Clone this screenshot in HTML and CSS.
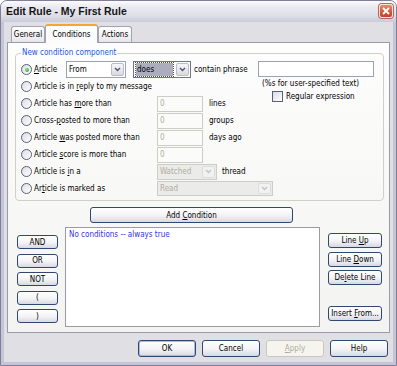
FILE: index.html
```html
<!DOCTYPE html>
<html lang="en">
<head>
    <meta charset="UTF-8">
    <title>Edit Rule - My First Rule</title>
    <link rel="stylesheet" href="styles.css">
</head>
<body>
<div class="window">
    <div class="titlebar">
        <span class="title">Edit Rule - My First Rule</span>
        <span class="close">
            <svg width="8" height="8" viewBox="0 0 8 8"><path d="M1 1 L7 7 M7 1 L1 7" stroke="#fff" stroke-width="1.8"/></svg>
        </span>
    </div>

    <div class="client">
        <div class="tabs">
            <span class="tab tab-general">General</span>
            <span class="tab tab-conditions active">Conditions</span>
            <span class="tab tab-actions">Actions</span>
        </div>

        <div class="page">
            <fieldset class="group">
                <legend>New condition component</legend>
                <div class="grid">
                    <!-- first row: field / operator / phrase -->
                    <div class="row1">
                        <span class="radio checked"></span>
                        <span class="lbl lbl-article"><u>A</u>rticle</span>
                        <span class="combo combo-from">
                            <span class="combo-text">From</span>
                            <span class="combo-btn"><svg width="7" height="5" viewBox="0 0 7 5"><path d="M1 1 L3.5 3.5 L6 1" fill="none" stroke="#4a5770" stroke-width="1.4"/></svg></span>
                        </span>
                        <span class="combo combo-does">
                            <span class="combo-text"><span class="sel">does</span></span>
                            <span class="combo-btn"><svg width="7" height="5" viewBox="0 0 7 5"><path d="M1 1 L3.5 3.5 L6 1" fill="none" stroke="#4a5770" stroke-width="1.4"/></svg></span>
                        </span>
                        <span class="phrase-lbl">contain phrase</span>
                    </div>
                    <div class="phrase">
                        <span class="textbox phrase-box"></span>
                        <span class="hint">(%s for user-specified text)</span>
                        <span class="check-row"><span class="check"></span>Regular expression</span>
                    </div>

                    <div class="opt"><span class="radio"></span><span class="lbl">Article is in <u>r</u>eply to my message</span></div>

                    <div class="opt"><span class="radio"></span><span class="lbl">Article has <u>m</u>ore than</span></div>
                    <div class="ctl ctl-short"><span class="textbox num">0</span><span>lines</span></div>

                    <div class="opt"><span class="radio"></span><span class="lbl">Cross-<u>p</u>osted to more than</span></div>
                    <div class="ctl"><span class="textbox num">0</span><span>groups</span></div>

                    <div class="opt"><span class="radio"></span><span class="lbl">Article <u>w</u>as posted more than</span></div>
                    <div class="ctl"><span class="textbox num">0</span><span>days ago</span></div>

                    <div class="opt"><span class="radio"></span><span class="lbl">Article <u>s</u>core is more than</span></div>
                    <div class="ctl"><span class="textbox num">0</span></div>

                    <div class="opt"><span class="radio"></span><span class="lbl">Article is <u>i</u>n a</span></div>
                    <div class="ctl">
                        <span class="combo combo-watched disabled">
                            <span class="combo-text">Watched</span>
                            <span class="combo-btn"><svg width="7" height="5" viewBox="0 0 7 5"><path d="M1 1 L3.5 3.5 L6 1" fill="none" stroke="#c3c3cb" stroke-width="1.4"/></svg></span>
                        </span>
                        <span class="after-combo">thread</span>
                    </div>

                    <div class="opt"><span class="radio"></span><span class="lbl">Ar<u>t</u>icle is marked as</span></div>
                    <div class="ctl">
                        <span class="combo combo-read disabled">
                            <span class="combo-text">Read</span>
                            <span class="combo-btn"><svg width="7" height="5" viewBox="0 0 7 5"><path d="M1 1 L3.5 3.5 L6 1" fill="none" stroke="#c3c3cb" stroke-width="1.4"/></svg></span>
                        </span>
                    </div>
                </div>
            </fieldset>

            <span class="btn btn-add"><span>Add <u>C</u>ondition</span></span>

            <div class="editor">
                <div class="ops">
                    <span class="btn op"><span>AND</span></span>
                    <span class="btn op"><span>OR</span></span>
                    <span class="btn op"><span>NOT</span></span>
                    <span class="btn op"><span>(</span></span>
                    <span class="btn op"><span>)</span></span>
                </div>
                <div class="list">No conditions -- always true</div>
                <div class="side">
                    <span class="btn"><span>Line <u>U</u>p</span></span>
                    <span class="btn"><span>Line <u>D</u>own</span></span>
                    <span class="btn"><span>De<u>l</u>ete Line</span></span>
                    <span class="btn insert"><span>Insert <u>F</u>rom...</span></span>
                </div>
            </div>
        </div>

        <div class="footer">
            <span class="btn btn-foot default"><span>OK</span></span>
            <span class="btn btn-foot"><span>Cancel</span></span>
            <span class="btn btn-foot disabled"><span><u>A</u>pply</span></span>
            <span class="btn btn-foot"><span>Help</span></span>
        </div>
    </div>
</div>
</body>
</html>
```

FILE: styles.css
```css
* {
    box-sizing: border-box;
}

body {
    margin: 0;
    background: #fff;
    font-family: "DejaVu Sans Condensed", "DejaVu Sans", sans-serif;
    font-size: 8px;
    color: #000;
}

u {
    text-underline-offset: 1px;
}

/* window frame */
.window {
    width: 397px;
    height: 366px;
    border: 1px solid #7f7e99;
    border-radius: 7px 7px 0 0;
    background: #c6c5d7;
    display: flex;
    flex-direction: column;
    overflow: hidden;
}

.titlebar {
    height: 21px;
    display: flex;
    align-items: flex-start;
    justify-content: space-between;
    padding: 0 3px 0 5px;
    background: linear-gradient(#fdfdff, #ebebf1 25%, #dedee7 70%, #cacad9);
}

.title {
    font: bold 10.5px "Liberation Sans", sans-serif;
    color: #151515;
    line-height: 21px;
}

.close {
    width: 14px;
    height: 14px;
    margin-top: 3px;
    border: 1px solid #f4e2dc;
    border-radius: 3px;
    background: linear-gradient(#e88a70, #d0583c 60%, #c24428);
    display: flex;
    align-items: center;
    justify-content: center;
    box-shadow: 0 0 0 1px #b06a60;
}

.client {
    flex: 1;
    margin: 0 3px 3px;
    background: #e0dfe3;
    display: flex;
    flex-direction: column;
}

/* tabs */
.tabs {
    height: 20px;
    display: flex;
    align-items: flex-end;
    padding-left: 7px;
}

.tab {
    height: 16px;
    border: 1px solid #a3a3b5;
    border-bottom: none;
    border-radius: 3px 3px 0 0;
    background: linear-gradient(#ffffff, #f2f2f2 60%, #e6e6e9);
    display: flex;
    align-items: center;
    justify-content: center;
}

.tab-general {
    width: 34px;
}

.tab-conditions {
    width: 53px;
}

.tab-actions {
    width: 34px;
}

.tab.active {
    height: 19px;
    margin-bottom: -1px;
    position: relative;
    z-index: 1;
    border-top: 2px solid #f6a531;
    background: #fcfcfc;
}

.page {
    height: 291px;
    margin: 0 3px;
    border: 1px solid #9a9aab;
    background: linear-gradient(#fdfdfd, #f3f3f1);
    padding: 5px 5px 5px 7px;
    display: flex;
    flex-direction: column;
}

/* condition group */
.group {
    margin: 0;
    padding: 3px 5px 3px 5px;
    border: 1px solid #d0d0c8;
    border-radius: 4px;
    min-width: 0;
}

.group legend {
    padding: 0 1px;
    line-height: 10px;
    color: #1e5bd5;
}

.grid {
    display: grid;
    grid-template-columns: 136px 101px 1fr;
    grid-template-rows: repeat(8, 17px);
}

.row1 {
    grid-column: 1 / 3;
    grid-row: 1;
    display: flex;
    align-items: center;
}

.opt {
    grid-column: 1;
    display: flex;
    align-items: center;
}

.ctl {
    grid-column: 2 / 4;
    display: flex;
    align-items: center;
    gap: 6px;
}

.ctl-short {
    grid-column: 2;
}

.lbl {
    margin-left: 2px;
    white-space: nowrap;
}

.lbl-article {
    width: 32px;
}

.phrase-lbl {
    margin-left: 3px;
    white-space: nowrap;
}

.phrase {
    grid-column: 3;
    grid-row: 1 / 4;
    display: flex;
    flex-direction: column;
}

.phrase-box {
    width: 116px;
    height: 16px;
}

.hint {
    line-height: 11px;
    margin: 1px 0 0 4px;
    white-space: nowrap;
}

.check-row {
    display: flex;
    align-items: center;
    gap: 3px;
    margin: 2px 0 0 14px;
    white-space: nowrap;
}

/* radio + check */
.radio {
    width: 11px;
    height: 11px;
    flex: none;
    border: 1px solid #58607a;
    border-radius: 50%;
    background: linear-gradient(135deg, #dcdce4, #ffffff);
    display: flex;
    align-items: center;
    justify-content: center;
}

.radio.checked::after {
    content: "";
    width: 4px;
    height: 4px;
    border-radius: 50%;
    background: radial-gradient(circle at 35% 35%, #8fe48f, #1f9e1f);
}

.check {
    width: 11px;
    height: 11px;
    border: 1px solid #58607a;
    background: linear-gradient(135deg, #dcdce4, #ffffff);
}

/* text boxes and combos */
.textbox {
    border: 1px solid #9aa2b4;
    background: #fff;
}

.num {
    width: 46px;
    height: 16px;
    border-color: #cdcdc6;
    background: #fbfbf9;
    color: #b0ae9e;
    padding-left: 2px;
    line-height: 14px;
}

.combo {
    height: 17px;
    border: 1px solid #9aa2b4;
    background: #fff;
    display: flex;
    align-items: stretch;
}

.combo-text {
    flex: 1;
    padding: 1px 2px;
    display: flex;
    align-items: center;
}

.combo-btn {
    width: 13px;
    margin: 1px;
    border: 1px solid #b8bccb;
    border-radius: 2px;
    background: linear-gradient(#f7f7fa, #d9d9e2);
    display: flex;
    align-items: center;
    justify-content: center;
}

.combo-from {
    width: 60px;
}

.combo-does {
    width: 58px;
    margin-left: 7px;
    border-color: #6c7590;
}

.sel {
    flex: 1;
    height: 100%;
    background: #abadbc;
    outline: 1px dotted #555;
    padding-left: 1px;
    display: flex;
    align-items: center;
}

.combo.disabled {
    border-color: #cdcdc6;
    background: #ebebe9;
    color: #aeada0;
}

.combo.disabled .combo-btn {
    border-color: #dcdcdc;
    background: #f2f2f2;
}

.combo-watched {
    width: 60px;
    height: 16px;
}

.after-combo {
    margin-left: -1px;
}

.combo-read {
    width: 116px;
    height: 15px;
}

/* buttons */
.btn {
    display: flex;
    align-items: center;
    justify-content: center;
    border: 1px solid #30486e;
    border-radius: 3px;
    background: linear-gradient(#ffffff, #f3f3f6 55%, #d8d8e2);
    white-space: nowrap;
}

.btn-add {
    width: 203px;
    height: 16px;
    margin: 6px 0 0 75px;
}

.editor {
    height: 100px;
    margin-top: 4px;
    display: flex;
}

.ops {
    width: 41px;
    margin-left: 2px;
    padding-top: 8px;
    display: flex;
    flex-direction: column;
    gap: 4.5px;
}

.op {
    height: 14px;
}

.list {
    width: 255px;
    margin-left: 7px;
    border: 1px solid #9c9aa8;
    background: #fff;
    color: #3434e6;
    padding: 2px 3px;
}

.side {
    width: 54px;
    margin-left: 8px;
    padding: 6px 0 6px;
    display: flex;
    flex-direction: column;
    gap: 3.5px;
}

.side .btn {
    height: 15px;
}

.side .insert {
    margin-top: auto;
}

.footer {
    display: flex;
    justify-content: flex-end;
    gap: 6px;
    padding: 7px 5px 0 0;
}

.btn-foot {
    width: 58px;
    height: 17px;
}

.btn.default {
    box-shadow: inset 0 0 0 1px #a8bbe6;
}

.btn.disabled {
    border-color: #cac8bd;
    background: #f5f4ee;
    color: #aeada0;
}
```
